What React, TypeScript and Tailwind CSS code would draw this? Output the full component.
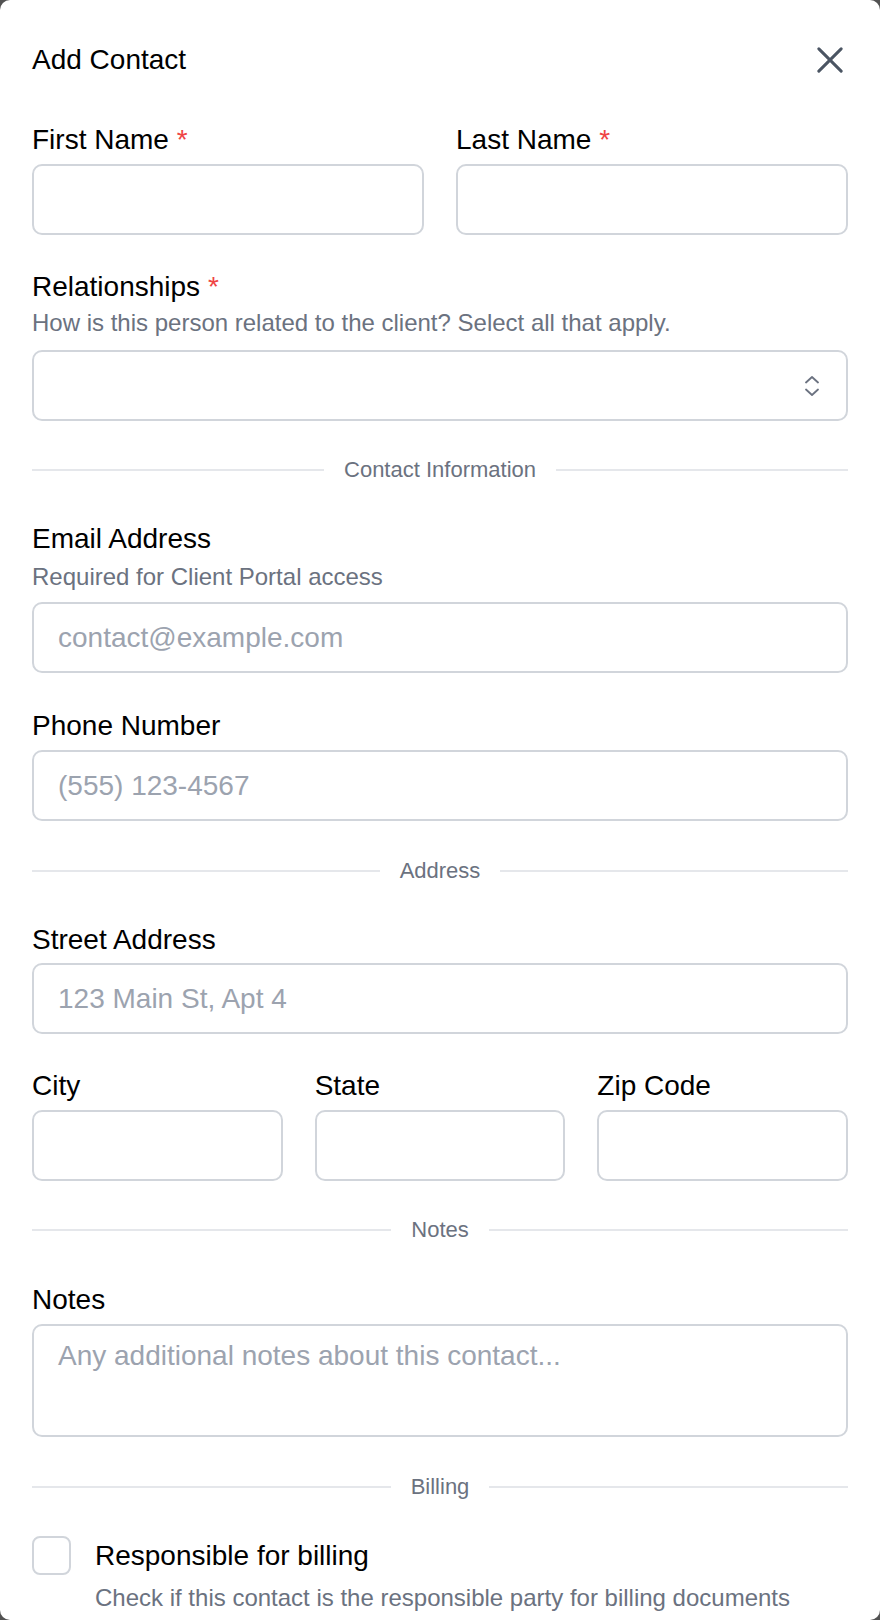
import type { ReactNode } from 'react';

const Req = () => <span className="text-[#ef4444]"> *</span>;

const Label = ({ children }: { children: ReactNode }) => (
  <label className="block h-[40px] leading-[40px] text-[28px] text-black">{children}</label>
);

const Input = ({ placeholder, className = 'mt-[4px]' }: { placeholder?: string; className?: string }) => (
  <input
    type="text"
    placeholder={placeholder}
    className={`block h-[71px] w-full rounded-[10px] border-2 border-[#d1d5db] bg-white px-6 text-[28px] text-black outline-none placeholder:text-[#9ca3af] ${className}`}
  />
);

const Divider = ({ label, className }: { label: string; className: string }) => (
  <div className={`flex h-[30px] items-center ${className}`}>
    <div className="h-[2px] flex-1 bg-[#e5e7eb]" />
    <span className="px-[20px] text-[22px] leading-[30px] text-[#6b7280]">{label}</span>
    <div className="h-[2px] flex-1 bg-[#e5e7eb]" />
  </div>
);

const AddContact = () => {
  return (
    <div className="min-h-screen bg-[#525252] font-['Liberation_Sans',Arial,sans-serif]">
      <div className="h-[1620px] overflow-hidden rounded-[10px] bg-white px-8 pt-[40px]">
        <div className="flex h-[40px] items-center justify-between">
          <h2 className="text-[28px] leading-[40px] text-black">Add Contact</h2>
          <button className="mr-[5px] text-[#4b5563]" aria-label="Close">
            <svg width="26" height="26" viewBox="5 5 14 14" fill="none" stroke="currentColor" strokeWidth="1.6" strokeLinecap="round">
              <path d="M18 6 6 18M6 6l12 12" />
            </svg>
          </button>
        </div>

        <div className="mt-[40px] grid grid-cols-2 gap-x-8">
          <div>
            <Label>
              First Name<Req />
            </Label>
            <Input />
          </div>
          <div>
            <Label>
              Last Name<Req />
            </Label>
            <Input />
          </div>
        </div>

        <div className="mt-[32px]">
          <Label>
            Relationships<Req />
          </Label>
          <p className="text-[24px] leading-[32px] text-[#6b7280]">
            How is this person related to the client? Select all that apply.
          </p>
          <button className="mt-[11px] flex h-[71px] w-full items-center justify-end rounded-[10px] border-2 border-[#d1d5db] bg-white pr-[27px]">
            <svg width="14" height="20" viewBox="0 0 14 20" fill="none" stroke="#6b7280" strokeWidth="1.8" strokeLinecap="round" strokeLinejoin="round">
              <path d="M1 6.5 7 1l6 5.5M1 13.5 7 19l6-5.5" />
            </svg>
          </button>
        </div>

        <Divider label="Contact Information" className="mt-[34px]" />

        <div className="mt-[34px]">
          <Label>Email Address</Label>
          <p className="mt-[2px] text-[24px] leading-[32px] text-[#6b7280]">Required for Client Portal access</p>
          <Input placeholder="contact@example.com" className="mt-[9px]" />
        </div>

        <div className="mt-[33px]">
          <Label>Phone Number</Label>
          <Input placeholder="(555) 123-4567" />
        </div>

        <Divider label="Address" className="mt-[35px]" />

        <div className="mt-[34px]">
          <Label>Street Address</Label>
          <Input placeholder="123 Main St, Apt 4" className="mt-[3px]" />
        </div>

        <div className="mt-[32px] grid grid-cols-3 gap-x-8">
          <div>
            <Label>City</Label>
            <Input />
          </div>
          <div>
            <Label>State</Label>
            <Input />
          </div>
          <div>
            <Label>Zip Code</Label>
            <Input />
          </div>
        </div>

        <Divider label="Notes" className="mt-[34px]" />

        <div className="mt-[35px]">
          <Label>Notes</Label>
          <textarea
            placeholder="Any additional notes about this contact..."
            className="mt-[4px] block h-[113px] w-full resize-none rounded-[10px] border-2 border-[#d1d5db] bg-white px-6 pt-[14px] text-[28px] leading-[32px] text-black outline-none placeholder:text-[#9ca3af]"
          />
        </div>

        <Divider label="Billing" className="mt-[35px]" />

        <div className="mt-[34px] flex gap-6">
          <div className="h-[39px] w-[39px] shrink-0 rounded-[8px] border-2 border-[#d1d5db] bg-white" />
          <div>
            <p className="h-[40px] text-[28px] leading-[40px] text-black">Responsible for billing</p>
            <p className="mt-[6px] text-[24px] leading-[32px] text-[#6b7280]">
              Check if this contact is the responsible party for billing documents
            </p>
          </div>
        </div>
      </div>
    </div>
  );
};

export default AddContact;
